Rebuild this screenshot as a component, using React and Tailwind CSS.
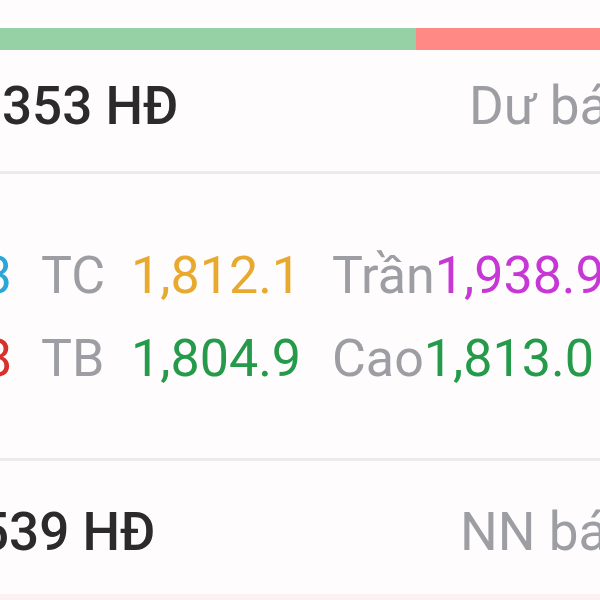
export default function App() {
  return (
    <div className="w-[600px] h-[600px] overflow-hidden bg-[#fefcfd] font-['Roboto',sans-serif]">
      <div className="h-[28px]" />
      <div className="flex h-[22px]">
        <div className="w-[416px] bg-[#95d1a5]" />
        <div className="flex-1 bg-[#ff8985]" />
      </div>
      <div className="mt-[30px] flex h-[53px] text-[53px] leading-[53px] whitespace-nowrap">
        <div className="w-[469px] shrink-0 font-medium text-[#2b2b2b]">
          <span className="ml-[-40px]">2,353 HĐ</span>
        </div>
        <div className="text-[#9d9ea3]">Dư bán</div>
      </div>
      <div className="mt-[38px] h-[3px] bg-[#ececec]" />
      <div className="mt-[76px] flex h-[52px] text-[52px] leading-[52px] whitespace-nowrap">
        <div className="w-[12px] shrink-0 flex justify-end text-[#2ba6d9]">
          <span>1,813</span>
        </div>
        <div className="ml-[29px] w-[90px] shrink-0 text-[#9d9ea3]">TC</div>
        <div className="w-[201px] shrink-0 text-[#e8aa2e]">1,812.1</div>
        <div className="text-[#9d9ea3]">Trần</div>
        <div className="text-[#c737d6]">1,938.9</div>
      </div>
      <div className="mt-[31px] flex h-[52px] text-[52px] leading-[52px] whitespace-nowrap">
        <div className="w-[12px] shrink-0 flex justify-end text-[#d9302b]">
          <span>1,808</span>
        </div>
        <div className="ml-[29px] w-[90px] shrink-0 text-[#9d9ea3]">TB</div>
        <div className="w-[201px] shrink-0 text-[#259a4a]">1,804.9</div>
        <div className="text-[#9d9ea3]">Cao</div>
        <div className="text-[#259a4a]">1,813.0</div>
      </div>
      <div className="mt-[73px] h-[3px] bg-[#ececec]" />
      <div className="mt-[45px] flex h-[53px] text-[53px] leading-[53px] whitespace-nowrap">
        <div className="w-[460px] shrink-0 font-medium text-[#2b2b2b]">
          <span className="ml-[-63px]">1,539 HĐ</span>
        </div>
        <div className="text-[#9d9ea3]">NN bán</div>
      </div>
      <div className="mt-[35px] h-[6px] bg-[#fdf0f2]" />
    </div>
  );
}
